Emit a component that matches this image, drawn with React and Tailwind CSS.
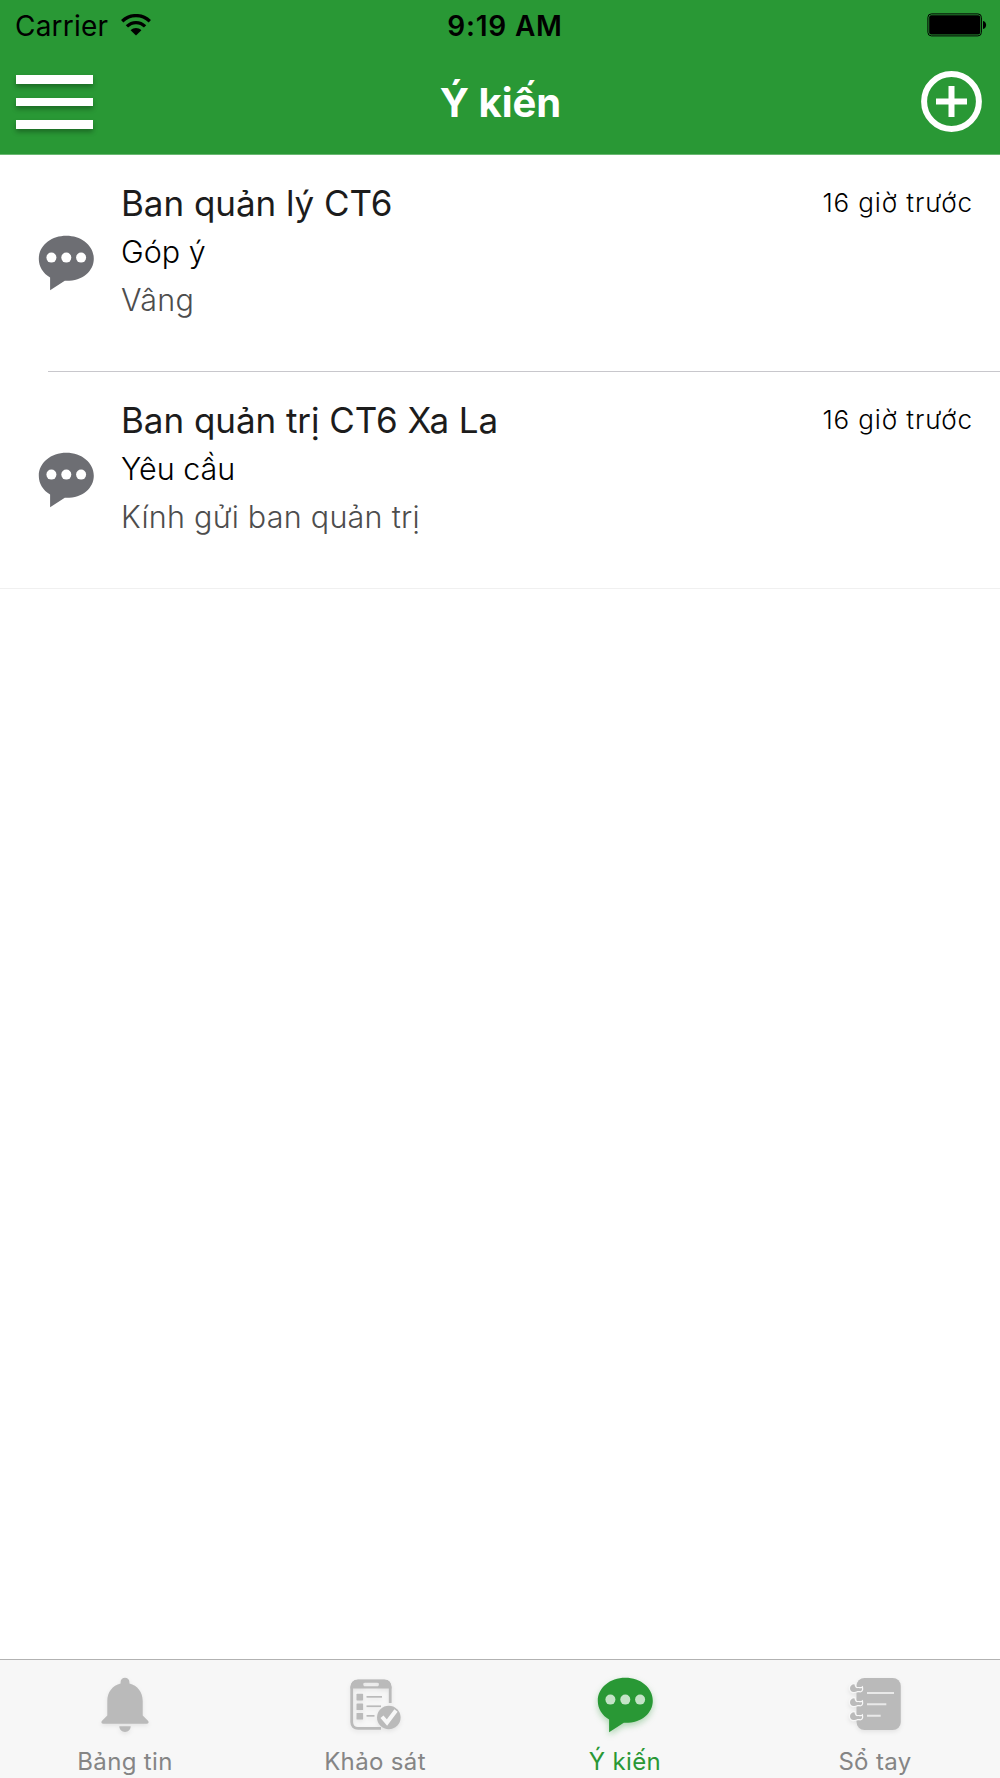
import React, { useState } from "react";

const messages = [
  {
    id: 1,
    sender: "Ban quản lý CT6",
    type: "Góp ý",
    content: "Vâng",
    time: "16 giờ trước",
  },
  {
    id: 2,
    sender: "Ban quản trị CT6 Xa La",
    type: "Yêu cầu",
    content: "Kính gửi ban quản trị",
    time: "16 giờ trước",
  },
];

const BubbleIcon = ({ className, dotClass }) => (
  <svg width="56" height="56" viewBox="0 0 56 56" className={className}>
    <path
      fill="currentColor"
      d="M28.3 0.7C12.9 0.7 0.8 10.7 0.8 23.7C0.8 31.7 5 38.2 12.1 42.4V55.2L26.8 45.8C43.8 46.5 55.8 36.5 55.8 23.7C55.8 10.7 43.7 0.7 28.3 0.7Z"
    />
    <g className={dotClass}>
      <circle cx="13.4" cy="22.6" r="5" />
      <circle cx="28.3" cy="22.6" r="5" />
      <circle cx="43.1" cy="22.6" r="5" />
    </g>
  </svg>
);

const BellIcon = () => (
  <svg width="56" height="56" viewBox="0 0 56 56" fill="currentColor" className="drop-shadow-[0_2px_2px_rgba(0,0,0,0.08)]">
    <path d="M28 0.7C25.4 0.7 23.6 2.5 23.6 5V6.5C15.5 8.5 10.3 15 10.3 24V38.5L4.8 44C4 45.6 4.5 46.7 6.2 46.7H49.8C51.5 46.7 52 45.6 51.2 44L45.7 38.5V24C45.7 15 40.5 8.5 32.4 6.5V5C32.4 2.5 30.6 0.7 28 0.7Z" />
    <path d="M22.3 49.3H33.7C33.7 52.5 31.2 55 28 55C24.8 55 22.3 52.5 22.3 49.3Z" />
  </svg>
);

const SurveyIcon = () => (
  <svg width="56" height="56" viewBox="0 0 56 56" className="drop-shadow-[0_2px_2px_rgba(0,0,0,0.08)]">
    <path
      d="M43.2 26V10.5C43.2 6.5 41 4 37.4 4H11C7.2 4 4.7 6.5 4.7 10.5V45C4.7 49 7.2 51.4 11 51.4H34"
      fill="none"
      stroke="currentColor"
      strokeWidth="2.8"
    />
    <path
      fill="currentColor"
      fillRule="evenodd"
      d="M3.5 11.5C3.5 6 6.3 2.7 11 2.7H37.4C42 2.7 44.5 6 44.5 11.5ZM18.2 5.6C16.9 5.6 16.3 6.3 16.3 7.4C16.3 8.5 16.9 9.2 18.2 9.2H30C31.3 9.2 31.9 8.5 31.9 7.4C31.9 6.3 31.3 5.6 30 5.6Z"
    />
    <g fill="currentColor">
      <rect x="9.5" y="16.8" width="6.6" height="6.6" rx="0.6" />
      <rect x="9.5" y="26.4" width="6.6" height="6.6" rx="0.6" />
      <rect x="9.5" y="36" width="6.6" height="6.6" rx="0.6" />
      <rect x="19.5" y="19" width="15.5" height="1.7" />
      <rect x="19.5" y="28.4" width="14.5" height="1.7" />
      <rect x="19.5" y="38" width="8" height="1.7" />
      <circle cx="41.8" cy="40.5" r="11.8" />
    </g>
    <path d="M35 39.8L40 45.5L49 33.5" fill="none" stroke="#f7f7f7" strokeWidth="4" />
  </svg>
);

const NotebookIcon = () => (
  <svg width="56" height="56" viewBox="0 0 56 56" className="drop-shadow-[0_2px_2px_rgba(0,0,0,0.08)]">
    <rect x="9.5" y="1" width="44.3" height="52" rx="8" fill="currentColor" />
    <path d="M20 16H47M20 27.3H39.3M20 38.7H33.7" stroke="#e9e9e9" strokeWidth="2" />
    {[11.3, 25.3, 39.3].map((y) => (
      <path
        key={y}
        transform={`translate(0 ${y})`}
        d="M7.4 -4C4.8 -4 3 -2.2 3 0C3 2.6 5 4 7.4 3.6C9.6 3.2 10.4 2.2 12.4 2.8C14.4 3.2 15.4 1.8 15 -0.4C13.6 0.6 12.6 -0.4 11 -0.2C9.2 0.2 8 -1 7.4 -4Z"
        fill="currentColor"
        stroke="#f7f7f7"
        strokeWidth="2.4"
        paintOrder="stroke"
      />
    ))}
  </svg>
);

const tabs = [
  { key: "news", label: "Bảng tin", icon: <BellIcon /> },
  { key: "survey", label: "Khảo sát", icon: <SurveyIcon /> },
  {
    key: "feedback",
    label: "Ý kiến",
    icon: (
      <BubbleIcon
        className="drop-shadow-[0_3px_3px_rgba(41,152,53,0.35)]"
        dotClass="fill-[#c4e3c7]"
      />
    ),
  },
  { key: "notes", label: "Sổ tay", icon: <NotebookIcon /> },
];

const StatusBar = () => (
  <div className="grid h-[51px] grid-cols-3 items-center pl-[15px] pr-[13px] text-[28px] leading-[51px] text-black">
    <div className="flex items-center gap-[13px]">
      <span className="pt-px tracking-[0.2px]">Carrier</span>
      <svg width="30" height="22" viewBox="0 0 30 22" className="mb-[3px]">
        <g fill="none" stroke="black" strokeWidth="3.3">
          <path d="M1.2 7.2C9 -0.3 21 -0.3 28.8 7.2" />
          <path d="M5.9 12.4C11.2 7.3 18.8 7.3 24.1 12.4" />
        </g>
        <path d="M9.6 16.2C12.6 13.4 17.4 13.4 20.4 16.2L15 21.6Z" />
      </svg>
    </div>
    <span className="pl-2 pt-px text-center font-semibold tracking-[0.8px]">9:19 AM</span>
    <svg width="60" height="24" viewBox="0 0 60 24" className="mb-[3px] justify-self-end">
      <rect x="0.9" y="0.9" width="53.5" height="22" rx="3.5" fill="none" stroke="black" strokeWidth="1" />
      <rect x="2.2" y="2.2" width="51" height="19.4" rx="2" />
      <path d="M56 8C60.2 8.6 60.2 15.4 56 16Z" />
    </svg>
  </div>
);

const App = () => {
  const [active, setActive] = useState("feedback");

  return (
    <div className="flex h-[1778px] w-[1000px] flex-col bg-white font-[Inter,sans-serif]">
      <header className="h-[155px] border-b border-[#69b871] bg-[#299835]">
        <StatusBar />
        <div className="grid h-[103px] grid-cols-3 items-center pl-[16px] pr-[18px]">
          <button className="mb-px flex w-[77px] flex-col gap-[14px]">
            <span className="h-[8.67px] w-full bg-white shadow-[0_3px_5px_rgba(0,0,0,0.3)]" />
            <span className="h-[8.67px] w-full bg-white shadow-[0_3px_5px_rgba(0,0,0,0.3)]" />
            <span className="h-[8.67px] w-full bg-white shadow-[0_3px_5px_rgba(0,0,0,0.3)]" />
          </button>
          <h1 className="pl-[3px] text-center text-[40px] font-bold text-white">Ý kiến</h1>
          <button className="mb-[3px] justify-self-end">
            <svg width="61" height="61" viewBox="0 0 61 61" fill="none" stroke="white" strokeWidth="6">
              <circle cx="30.5" cy="30.5" r="27.4" />
              <path d="M30.5 15V46M15 30.5H46" />
            </svg>
          </button>
        </div>
      </header>

      <main className="flex-1">
        {messages.map((m, i) => (
          <div key={m.id}>
            <div className="flex h-[216px] pl-[38px] pr-[27px] pt-6">
              <BubbleIcon
                className="mt-[56px] shrink-0 text-[#6d6e73]"
                dotClass="fill-white"
              />
              <div className="ml-[27px] flex-1">
                <p className="text-[35px] leading-[49px] tracking-[-0.05px] text-[#1c1c1c]">{m.sender}</p>
                <p className="text-[30.5px] font-light leading-[48px] text-black">{m.type}</p>
                <p className="text-[30.5px] font-light leading-[48px] tracking-[0.25px] text-[#4d4d4d]">{m.content}</p>
              </div>
              <span className="text-[26px] font-light leading-[48px] tracking-[0.9px] text-black">{m.time}</span>
            </div>
            <div className={i < messages.length - 1 ? "ml-12 h-px bg-[#c8c7cc]" : "h-px bg-[#f0f0f0]"} />
          </div>
        ))}
      </main>

      <nav className="grid h-[119px] grid-cols-4 border-t border-[#b2b2b2] bg-[#f7f7f7]">
        {tabs.map((t) => (
          <button
            key={t.key}
            onClick={() => setActive(t.key)}
            className={
              active === t.key
                ? "flex flex-col items-center pt-[17px] text-[#299835]"
                : "flex flex-col items-center pt-[17px] text-[#bababa]"
            }
          >
            {t.icon}
            <span
              className={
                active === t.key
                  ? "mt-[13px] text-[24px] leading-[32px] tracking-[0.35px] text-[#299835]"
                  : "mt-[13px] text-[24px] leading-[32px] tracking-[0.35px] text-[#858585]"
              }
            >
              {t.label}
            </span>
          </button>
        ))}
      </nav>
    </div>
  );
};

export default App;
